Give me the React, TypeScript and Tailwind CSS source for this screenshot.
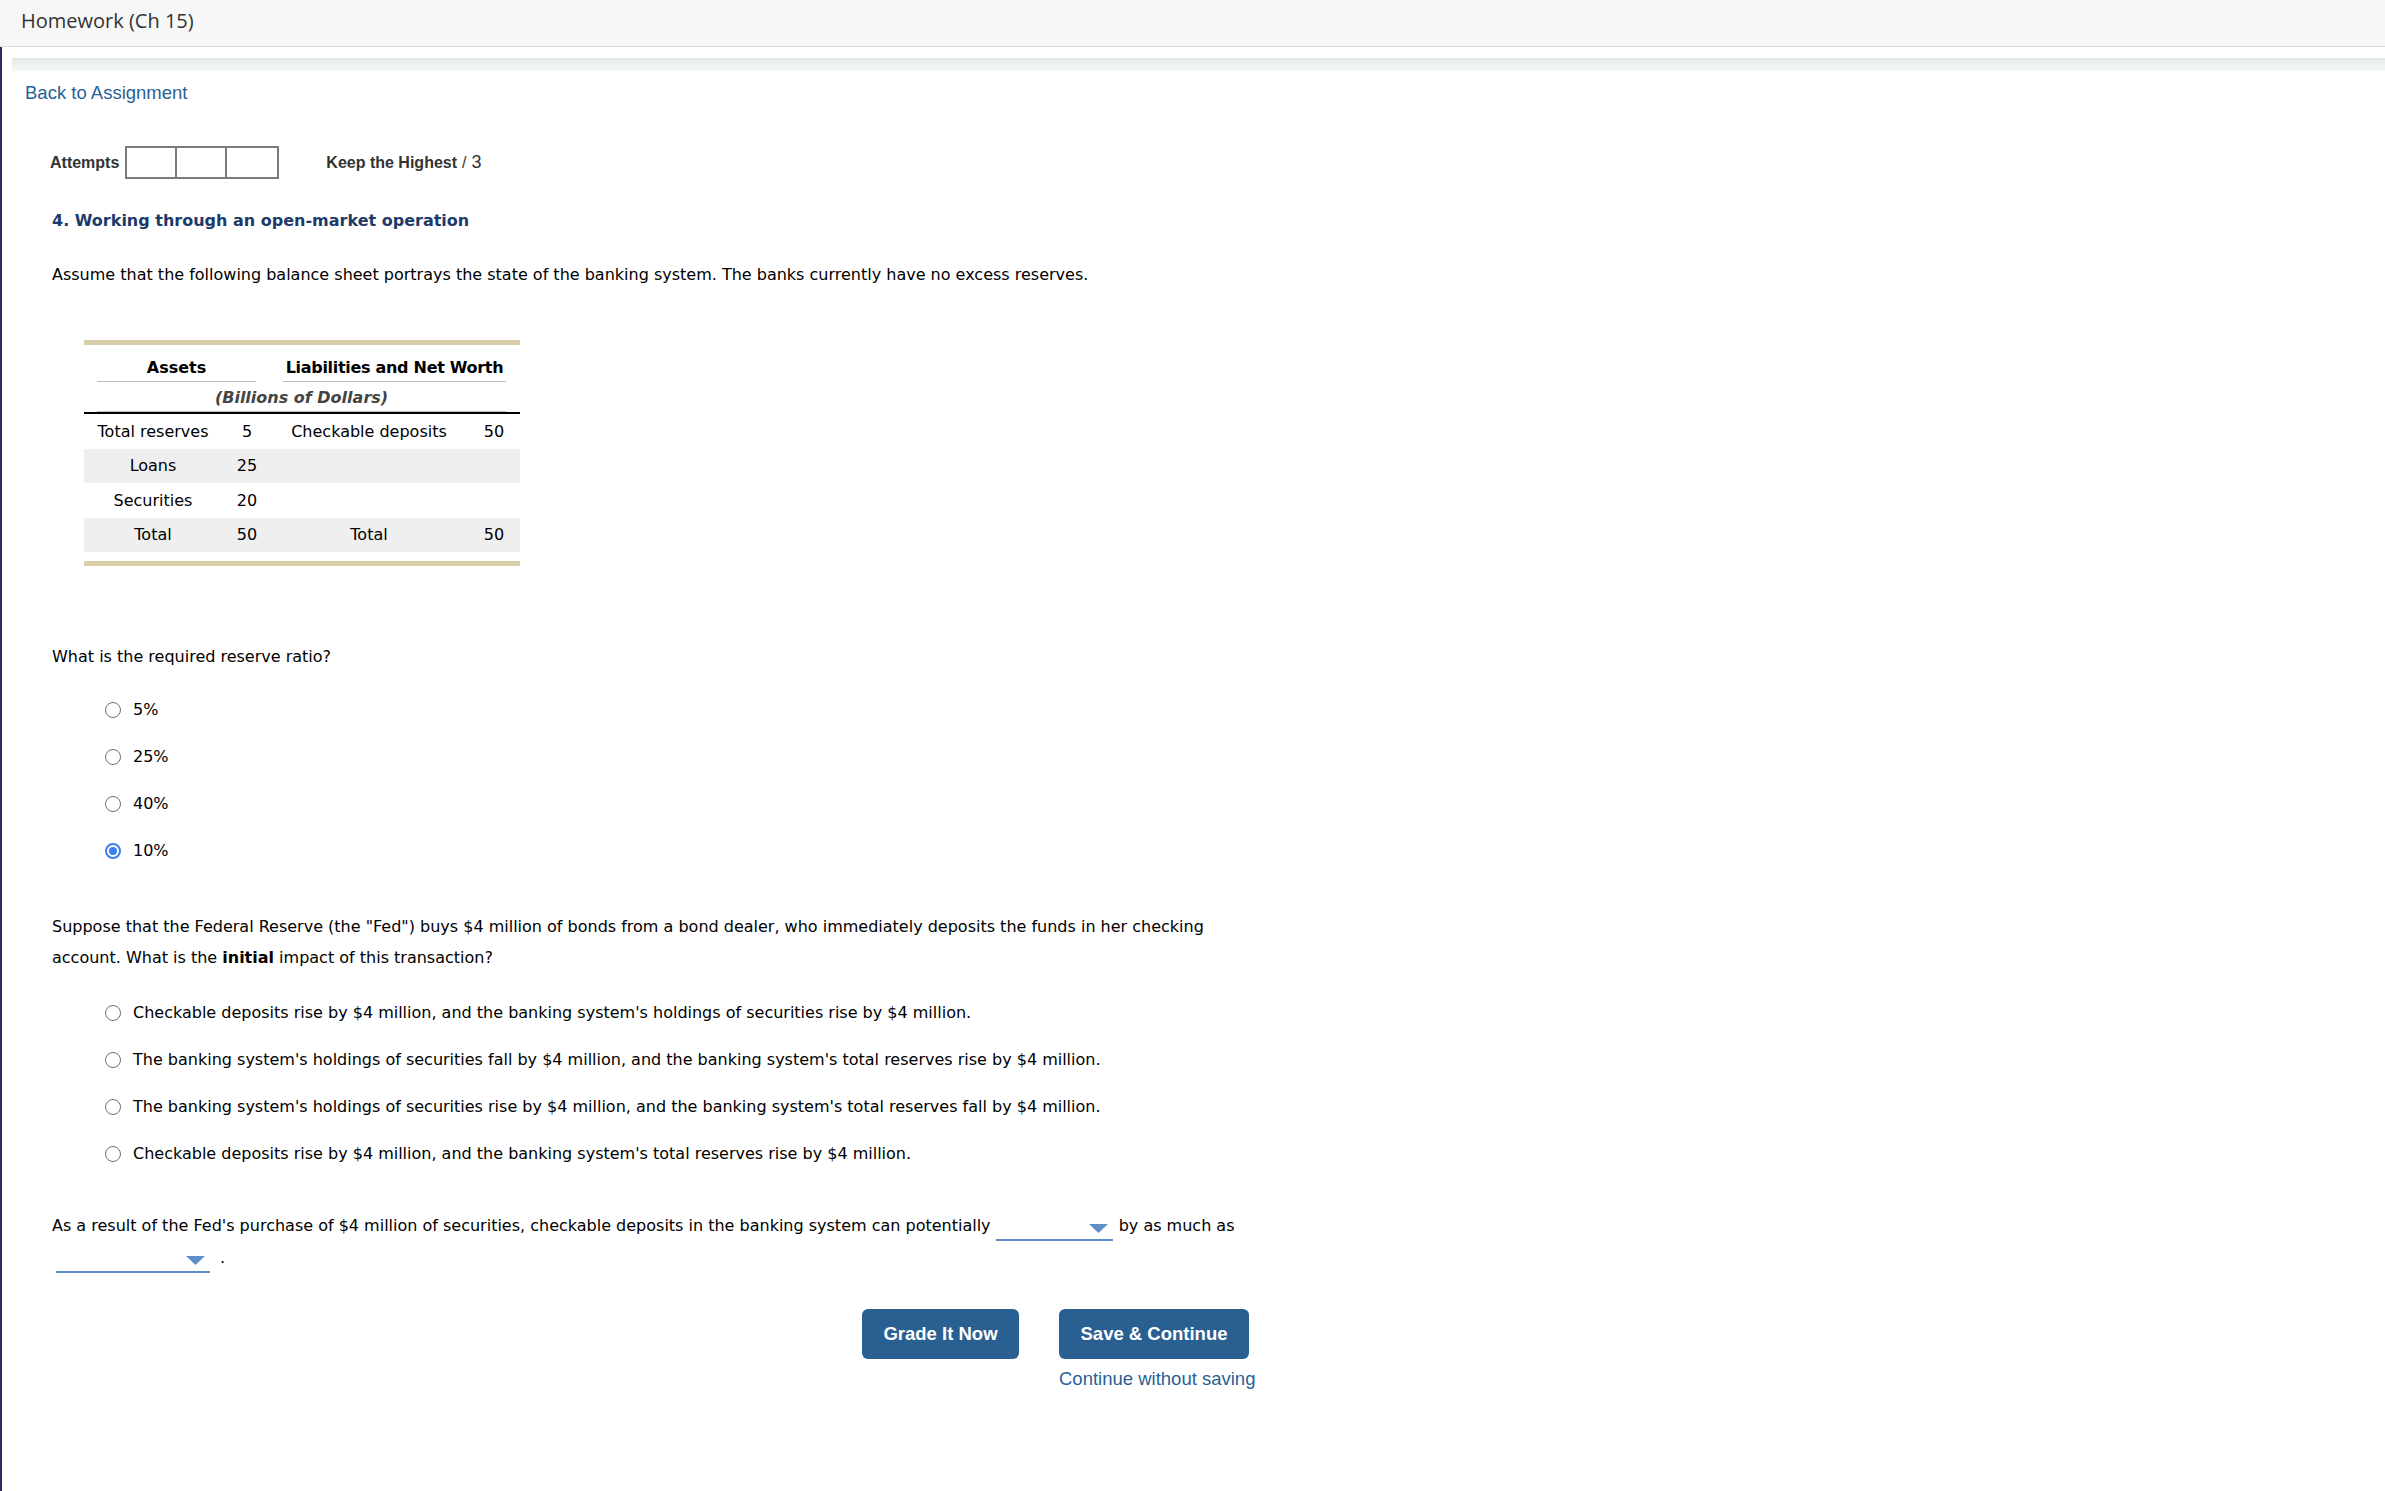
import React from "react";

const verdana = { fontFamily: '"DejaVu Sans", Verdana, sans-serif' };

function Radio({ checked, label }: { checked?: boolean; label: string }) {
  return (
    <div className="flex items-center h-[20px] ml-[53px]">
      {checked ? (
        <span className="w-[16px] h-[16px] rounded-full border-2 border-[#3a7ef2] bg-white flex items-center justify-center shrink-0">
          <span className="w-[8px] h-[8px] rounded-full bg-[#3a7ef2]" />
        </span>
      ) : (
        <span className="w-[16px] h-[16px] rounded-full border-[1.5px] border-[#6f6f6f] bg-white shrink-0" />
      )}
      <span className="ml-[12px] text-[16px] leading-[20px] text-black">{label}</span>
    </div>
  );
}

function Dropdown({ width, className }: { width: string; className?: string }) {
  return (
    <span
      className={`inline-flex justify-end items-start h-[19px] border-b-2 border-[#5b8ac4] pr-[5px] pt-[2px] align-[-2px] ${width} ${className ?? ""}`}
    >
      <svg width="19" height="9" viewBox="0 0 19 9">
        <polygon points="0,0 19,0 9.5,9" fill="#5e8fc9" />
      </svg>
    </span>
  );
}

export default function App() {
  return (
    <div className="min-h-[1491px] bg-white flex flex-col">
      <header
        className="h-[47px] bg-[#f7f7f7] border-b border-[#dcdcdc] flex items-center pl-[21px] pb-[4px] text-[20px] text-[#333]"
        style={{ fontFamily: '"Open Sans", sans-serif' }}
      >
        Homework (Ch 15)
      </header>
      <div className="flex-1 border-l-2 border-[#2a2b5f]">
        <div className="mt-[11px] ml-[10px] h-[13px] bg-linear-to-b from-[#e6eaea] to-[#f6f8f8] border-t border-[#e2e6e6]" />
        <div
          className="mt-[10px] pl-[23px] h-[24px] leading-[24px] text-[18.5px] text-[#2a5f96]"
          style={{ fontFamily: '"Liberation Sans", Arial, sans-serif' }}
        >
          <a href="#">Back to Assignment</a>
        </div>

        <div className="pl-[50px]" style={verdana}>
          <div
            className="mt-[41px] -ml-[2px] flex items-center h-[33px] text-[#333]"
            style={{ fontFamily: '"Liberation Sans", Arial, sans-serif' }}
          >
            <span className="font-bold text-[16px]">Attempts</span>
            <div className="ml-[6px] flex border-2 border-[#7b7b7b] divide-x-2 divide-[#7b7b7b]">
              <div className="w-[50px] h-[29px]" />
              <div className="w-[50px] h-[29px]" />
              <div className="w-[50px] h-[29px]" />
            </div>
            <span className="ml-[47px] font-bold text-[16px]">Keep the Highest</span>
            <span className="ml-[5px] text-[16px]">/</span>
            <span className="ml-[5px] text-[18px]">3</span>
          </div>

          <div className="mt-[32px] h-[20px] leading-[20px] text-[16px] font-bold text-[#1d3a6b]">
            4. Working through an open-market operation
          </div>

          <div className="mt-[34px] h-[20px] leading-[20px] text-[16px] text-black">
            Assume that the following balance sheet portrays the state of the banking system. The banks currently have no excess reserves.
          </div>

          {/* Balance sheet */}
          <div className="mt-[55px] ml-[32px] w-[436px] text-[16px] text-black">
            <div className="h-[5px] bg-[#d8cea8]" />
            <div className="grid grid-cols-[188px_248px] pt-[13px]">
              <div className="ml-[13px] mr-[16px] pb-[3px] border-b border-[#bdbdbd] flex justify-center font-bold leading-[20px] whitespace-nowrap">
                Assets
              </div>
              <div className="ml-[11px] mr-[14px] pb-[3px] border-b border-[#bdbdbd] flex justify-center font-bold leading-[20px] whitespace-nowrap tracking-[-0.3px]">
                Liabilities and Net Worth
              </div>
            </div>
            <div className="ml-[13px] mr-[14px] pt-[6px] pb-[3px] border-b border-[#bdbdbd] text-center font-bold italic text-[#444] leading-[20px] whitespace-nowrap">
              (Billions of Dollars)
            </div>
            <div className="h-[2px] bg-black" />
            {[
              ["Total reserves", "5", "Checkable deposits", "50", false, "h-[35px]"],
              ["Loans", "25", "", "", true, "h-[34px]"],
              ["Securities", "20", "", "", false, "h-[35px]"],
              ["Total", "50", "Total", "50", true, "h-[34px]"],
            ].map(([a, b, c, d, gray, h], i) => (
              <div
                key={i}
                className={`grid grid-cols-[138px_50px_194px_54px] items-center text-center whitespace-nowrap ${h} ${gray ? "bg-[#efefef]" : ""}`}
              >
                <div>{a}</div>
                <div>{b}</div>
                <div>{c}</div>
                <div className="pl-[2px]">{d}</div>
              </div>
            ))}
            <div className="h-[9px]" />
            <div className="h-[5px] bg-[#d8cea8]" />
          </div>

          <div className="mt-[81px] h-[20px] leading-[20px] text-[16px] text-black">
            What is the required reserve ratio?
          </div>

          <div className="mt-[33px] flex flex-col gap-[27px]">
            <Radio label="5%" />
            <Radio label="25%" />
            <Radio label="40%" />
            <Radio label="10%" checked />
          </div>

          <p className="mt-[50px] text-[16px] leading-[31px] text-black">
            Suppose that the Federal Reserve (the "Fed") buys $4 million of bonds from a bond dealer, who immediately deposits the funds in her checking
            <br />
            account. What is the <b>initial</b> impact of this transaction?
          </p>

          <div className="mt-[30px] flex flex-col gap-[27px]">
            <Radio label="Checkable deposits rise by $4 million, and the banking system's holdings of securities rise by $4 million." />
            <Radio label="The banking system's holdings of securities fall by $4 million, and the banking system's total reserves rise by $4 million." />
            <Radio label="The banking system's holdings of securities rise by $4 million, and the banking system's total reserves fall by $4 million." />
            <Radio label="Checkable deposits rise by $4 million, and the banking system's total reserves rise by $4 million." />
          </div>

          <p className="mt-[46px] text-[16px] leading-[32px] text-black">
            As a result of the Fed's purchase of $4 million of securities, checkable deposits in the banking system can potentially{" "}
            <Dropdown width="w-[117px]" />
            <span className="ml-[6px]">by as much as</span>
            <br />
            <Dropdown width="w-[154px]" className="ml-[4px]" />
            <span className="ml-[10px]">.</span>
          </p>

          <div
            className="mt-[35px] w-[1204px] flex justify-end gap-[40px]"
            style={{ fontFamily: '"Liberation Sans", Arial, sans-serif' }}
          >
            <button className="w-[157px] h-[50px] rounded-[6px] bg-[#2a5f92] text-white font-bold text-[18.5px]">
              Grade It Now
            </button>
            <div className="flex flex-col items-start w-[197px]">
              <button className="w-[190px] h-[50px] rounded-[6px] bg-[#2a5f92] text-white font-bold text-[18.5px]">
                Save &amp; Continue
              </button>
              <a href="#" className="mt-[10px] h-[20px] leading-[20px] text-[18.5px] text-[#2a5f96] whitespace-nowrap">
                Continue without saving
              </a>
            </div>
          </div>
        </div>
      </div>
    </div>
  );
}
